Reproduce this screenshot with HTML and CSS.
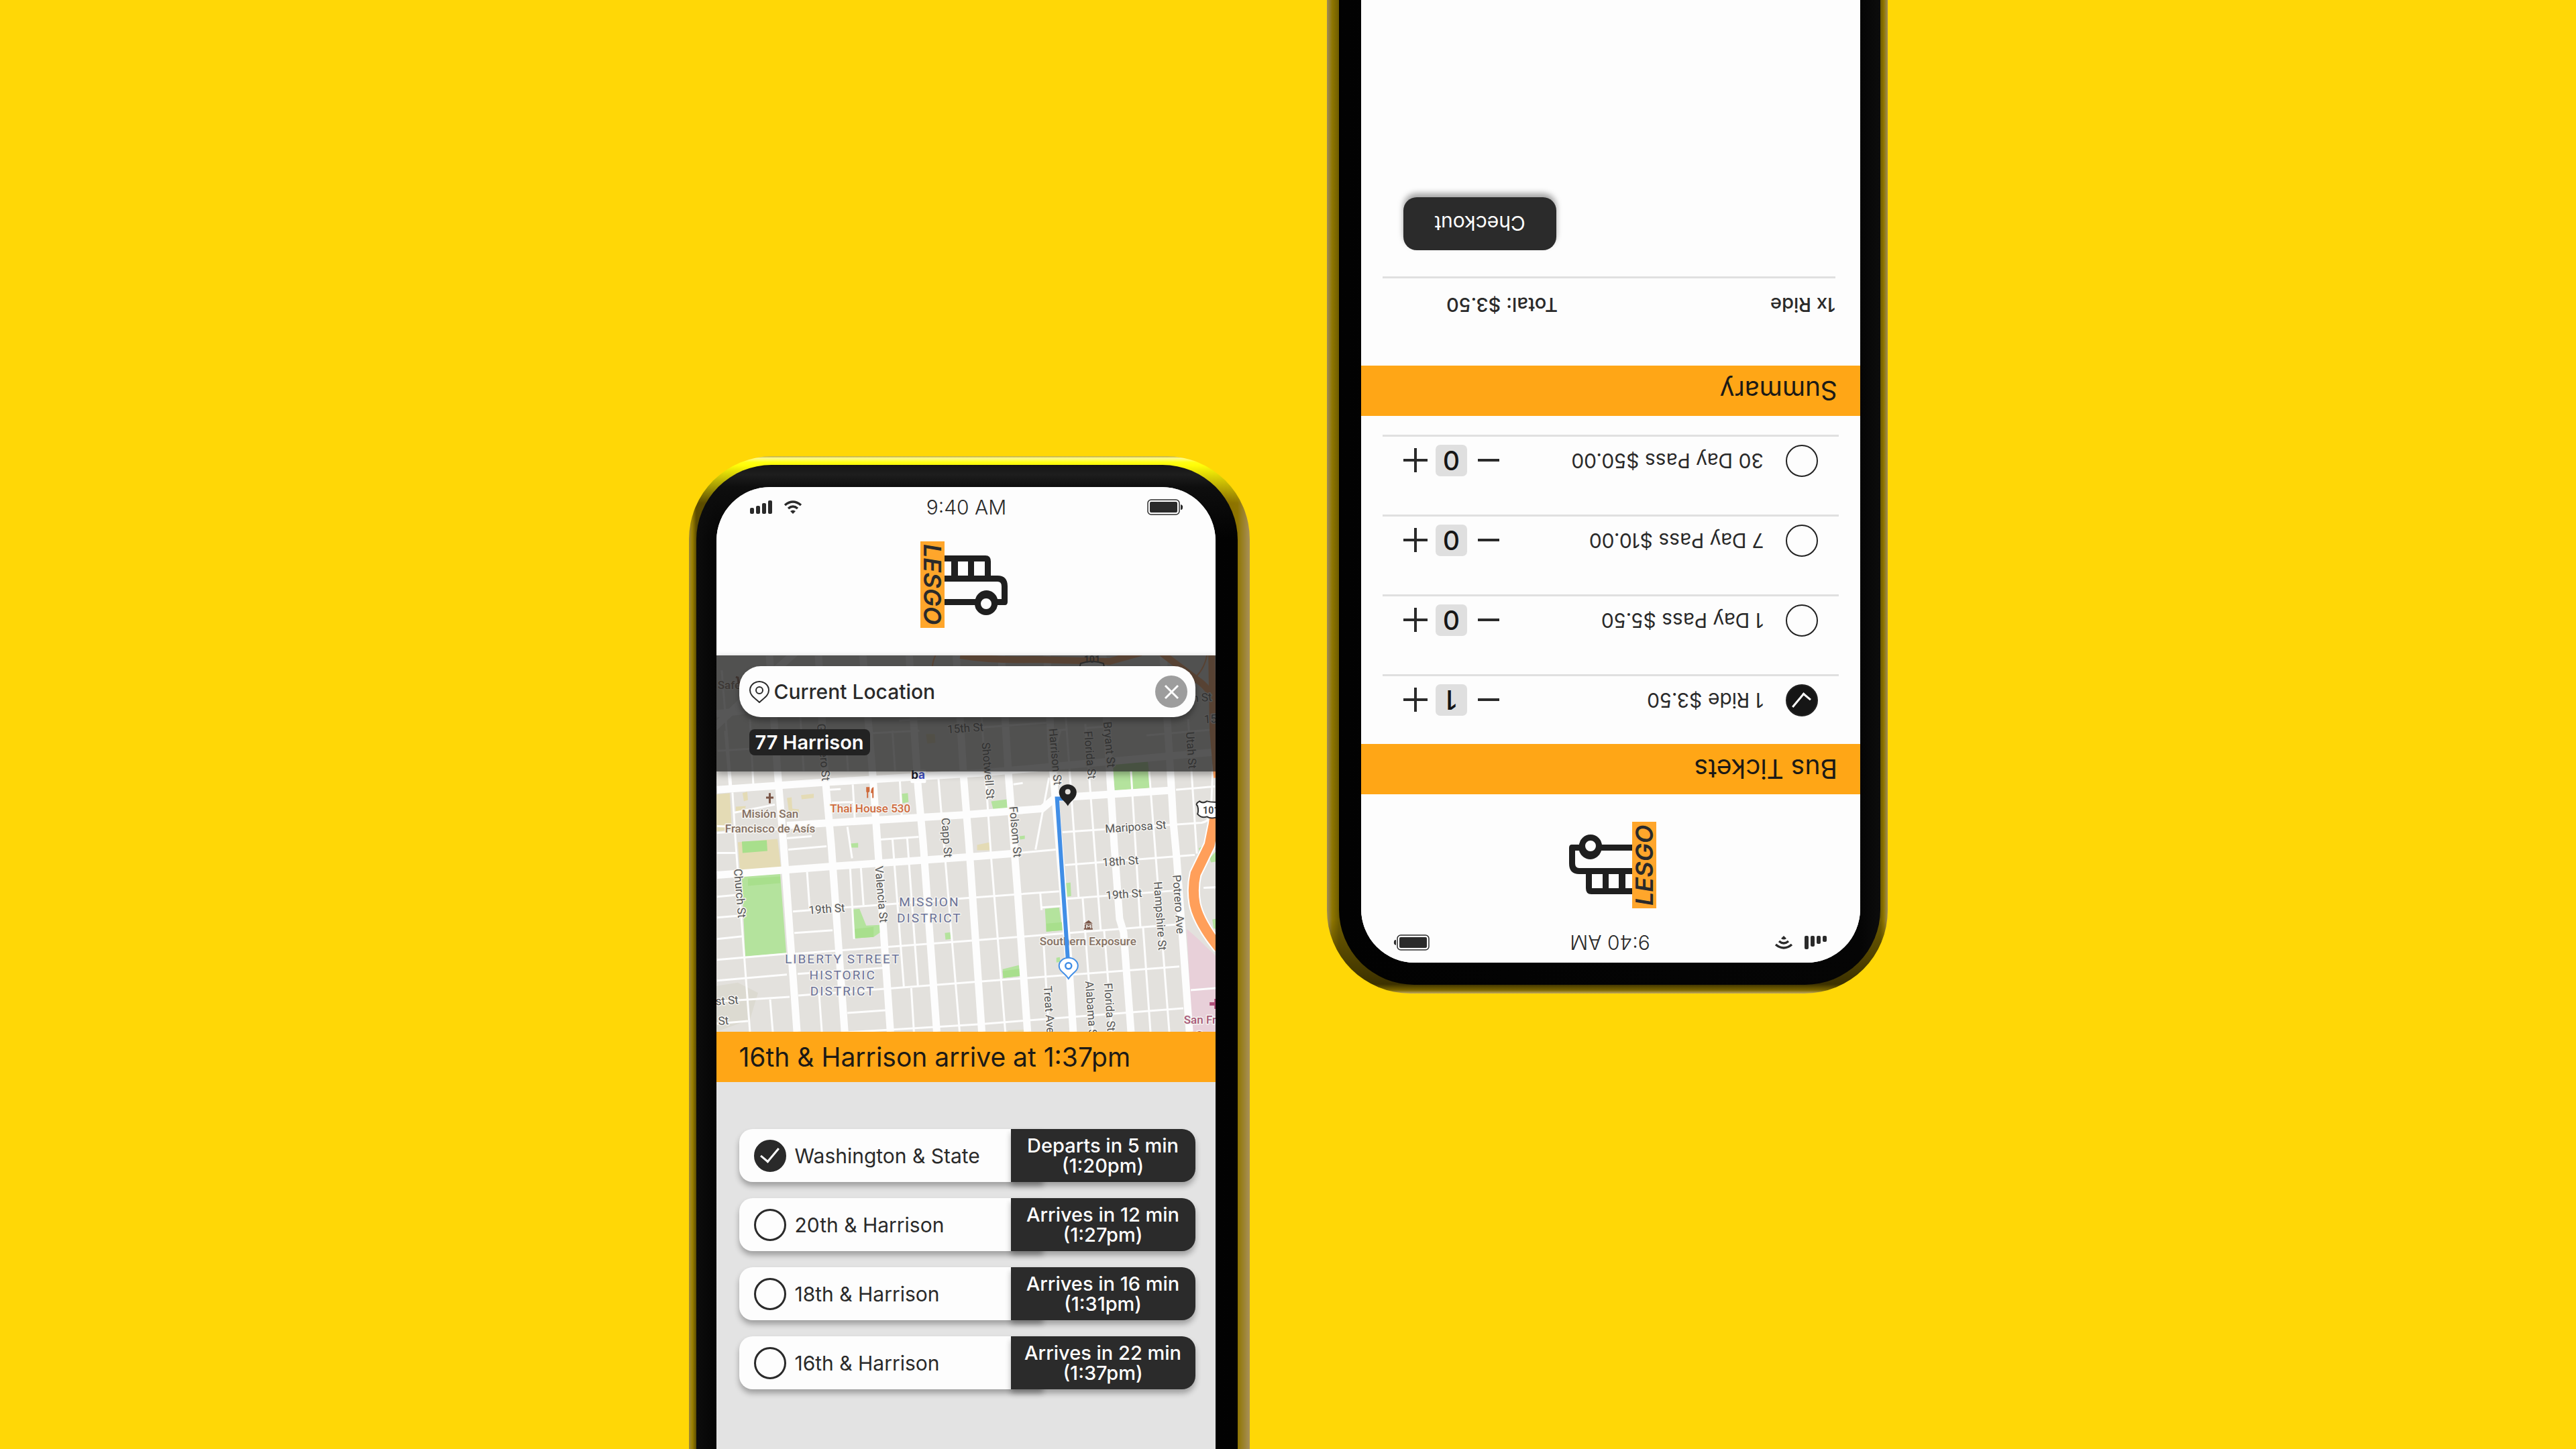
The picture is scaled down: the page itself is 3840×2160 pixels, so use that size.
FILE: index.html
```html
<!DOCTYPE html>
<html lang="en">
<head>
<meta charset="utf-8">
<meta name="viewport" content="width=device-width, initial-scale=1">
<title>LESGO</title>
<link rel="stylesheet" href="styles.css">
</head>
<body>
<svg class="defs" aria-hidden="true">
  <symbol id="bars" viewBox="0 0 34 20">
    <rect x="0" y="11" width="6" height="9" rx="2"/><rect x="9" y="8" width="6" height="12" rx="2"/><rect x="18" y="4" width="6" height="16" rx="2"/><rect x="27" y="0" width="6" height="20" rx="2"/>
  </symbol>
  <symbol id="wifi" viewBox="0 0 28 20">
    <path d="M2 7Q14-3 26 7M7 12Q14 6 21 12" fill="none" stroke="currentColor" stroke-width="3.500"/><path d="M10 16Q14 13 18 16L14 20Z"/>
  </symbol>
  <symbol id="battery" viewBox="0 0 54 24">
    <rect x="1" y="1" width="47" height="22" rx="5" fill="none" stroke="currentColor" stroke-width="1.5"/><rect x="4" y="4" width="41" height="16" rx="2"/><path d="M50 8Q54 9 53 13Q53 16 50 16Z"/>
  </symbol>
  <symbol id="bus" viewBox="0 0 96 90">
    <path fill-rule="evenodd" d="M0 0H61Q69 0 69 9V30H79Q94 30 94 46V69Q94 74 90 74H79A17 17 0 0 1 46 74H0V65H46A17 17 0 0 1 79 65H85V46Q85 39 79 39H0V30H10V9H0ZM20 9V30H35V9ZM44 9V30H60V9Z"/>
    <circle cx="62" cy="72" r="12.5" fill="#fdfdfd" stroke="currentColor" stroke-width="9"/>
  </symbol>
</svg>
<main class="stage">
  <section class="phone phone-lit" aria-label="Route">
    <div class="bezel">
      <div class="screen screen-grey">
        <header class="top">
          <div class="status">
            <span class="signal"><svg class="i-bars"><use href="#bars"/></svg><svg class="i-wifi"><use href="#wifi"/></svg></span>
            <span>9:40 AM</span>
            <svg class="i-battery"><use href="#battery"/></svg>
          </div>
          <div class="logo"><span class="logo-tag">LESGO</span><svg class="logo-bus"><use href="#bus"/></svg></div>
        </header>
        <div class="map-area">
          <svg class="map" viewBox="28 18 743 560" preserveAspectRatio="xMidYMid slice" role="img" aria-label="Map of the Mission District">
            <rect x="28" y="18" width="743" height="560" fill="#e3e1dd"/>
            <path d="M28 510L60 505L90 520L78 560L28 578Z" fill="#dcdad1"/>
            <path fill="#e4dbb5" d="M28 225L48 223L51 277L28 280ZM60 296L119 291L124 333L63 338ZM67 223L74 221L75 233L69 235ZM57 243L72 242L70 249L57 250ZM133 230L140 229L141 246L151 247L151 253L136 251ZM154 226L173 224L173 230L155 232ZM416 300L435 296L435 308L416 308ZM462 576L487 575L487 578L462 578ZM340 135L353 135L354 148L342 149Z"/>
            <path fill="#b4e39d" d="M66 347L123 343L132 461L71 466ZM231 396L241 395L251 420L272 419L272 430L262 437L234 439ZM368 431L376 430L377 440L369 441ZM304 224L313 223L314 236L305 238ZM227 298L239 297L239 304L228 304ZM617 180L670 176L675 215L621 219ZM437 235L461 232L462 245L440 247ZM479 287L487 286L487 291L480 292ZM548 357L555 356L556 376L549 377ZM517 395L538 393L543 427L519 429ZM534 468L539 467L540 474L534 475ZM454 485L478 479L481 495L455 498ZM746 305L755 300L750 320ZM762 320L771 310V325L764 326ZM766 411L771 410V425L768 424Z"/>
            <path fill="#a8df8c" d="M66 295L103 293L104 309L67 312ZM75 350L123 347L123 357L75 361ZM234 425L262 422L262 437L234 439ZM519 417L543 415L543 427L519 429ZM454 488L481 484L481 495L455 498Z"/>
            <path fill="#e8d0d9" d="M728 425L745 440L771 465V578H736Z"/>
            <g class="minor">
              <path d="M29 282L130 276M29 272L57 273M29 440L67 436M29 408L65 405M29 377L62 374M144 431L201 427M223 550L280 546M29 566L75 562M142 399L300 387L400 379L538 369M550 380L710 368M29 471L133 462M145 462L400 443L717 418M29 502L133 493M149 492L277 483M29 533L137 526M150 524L412 504L717 481M220 579L417 567L723 543M467 313L533 307M547 330L740 315M543 281L750 267Q762 265 764 252L767 180M712 218L770 213M734 516L771 513M753 364L771 363"/>
              <path d="M36 40L50 213M41 130L48 213M52 222L57 300L78 578M78 113L83 210M163 340L167 397M227 333L233 440M243 333L247 390M290 290L307 511M312 290L328 510M358 195L390 578M318 513L322 578M181 523L185 578M108 530L112 578M231 210L234 262M301 203L304 257M223 273L230 320M133 290L170 287M135 307L192 302M272 292L329 288M200 237L231 236M54 252L115 240M29 312L57 312M196 218L213 217M290 130L294 190M150 60L158 190M220 130L224 190M300 115L400 108M200 137L330 130"/>
              <path d="M418 40L437 320L458 578M523 200L503 307M548 110L567 378M573 378L588 578M577 120L600 427M605 427L617 578M645 190L659 422M663 423L674 578M672 190L702 578M730 113L743 313M515 447L523 578M510 372L512 397M512 393L540 391M425 125L520 118M532 130L550 128M578 126L605 124M668 137L771 128M470 210L484 208M540 130L533 155M30 160L110 155"/>
            </g>
            <g class="major" id="majors">
              <path d="M107 18L119 190L128 300L148 578M180 18L190 200L199 300L219 578M246 18L261 200L268 300L287 578M315 18L328 213L336 300L356 578M385 18L396 200L404 300L423 578M452 18L463 200L476 367L491 578M520 18L527 167L552 467L559 578M603 18L613 187L620 300L628 410L634 430L645 578M693 18L705 213L708 267L713 320L732 578"/>
              <path d="M29 218L187 207L420 193L600 177L767 162M133 271L400 255L513 246L532 230L702 219M29 345L200 332L417 317L467 313M20 130L110 45L150 10M28 105L70 100"/>
            </g>
            <g fill="none" stroke="#ff9f5a">
              <path stroke="#fff" stroke-width="19" d="M772 240L768 270L762 300L741 343Q736 365 740 388Q746 416 776 453"/>
              <path stroke-width="15" d="M772 240L768 270L762 300L741 343Q736 365 740 388Q746 416 776 453"/>
              <path stroke-width="10" d="M391 18Q440 26 500 24L613 27L660 14M690 14L747 57Q765 70 775 100M765 18L767 130L773 200"/>
              <path stroke-width="2" d="M354 18Q348 30 349 50M700 68Q750 60 758 18"/>
            </g>
            <g class="road">
              <text transform="translate(54 336) rotate(85)">Church St</text>
              <text transform="translate(264 332) rotate(85)">Valencia St</text>
              <text transform="translate(363 260) rotate(86)">Capp St</text>
              <text transform="translate(178 120) rotate(85)">Guerrero St</text>
              <text transform="translate(423 148) rotate(85)">Shotwell St</text>
              <text transform="translate(464 243) rotate(85)">Folsom St</text>
              <text transform="translate(523 127) rotate(85)">Harrison St</text>
              <text transform="translate(575 131) rotate(85)">Florida St</text>
              <text transform="translate(604 117) rotate(85)">Bryant St</text>
              <text transform="translate(727 132) rotate(86)">Utah St</text>
              <text transform="translate(679 355) rotate(86)">Hampshire St</text>
              <text transform="translate(707 345) rotate(86)">Potrero Ave</text>
              <text transform="translate(515 510) rotate(86)">Treat Ave</text>
              <text transform="translate(577 503) rotate(86)">Alabama St</text>
              <text transform="translate(605 506) rotate(86)">Florida St</text>
              <text transform="translate(166 403) rotate(-4)">19th St</text>
              <text transform="translate(603 332) rotate(-4)">18th St</text>
              <text transform="translate(608 381) rotate(-4)">19th St</text>
              <text transform="translate(607 282) rotate(-4)">Mariposa St</text>
              <text transform="translate(372 134) rotate(-4)">15th St</text>
              <text transform="translate(754 119) rotate(-4)">15th St</text>
              <text transform="translate(731 88) rotate(-4)">th St</text>
              <text transform="translate(8 540) rotate(-4)">21st St</text>
              <text transform="translate(-11 571) rotate(-4)">22nd St</text>
            </g>
            <g class="area">
              <text x="345" y="391">MISSION</text>
              <text x="345" y="415">DISTRICT</text>
              <text x="216" y="476">LIBERTY STREET</text>
              <text x="216" y="500">HISTORIC</text>
              <text x="216" y="524">DISTRICT</text>
            </g>
            <g class="place">
              <text x="108" y="260">Misión San</text>
              <text x="108" y="282">Francisco de Asís</text>
              <text x="581" y="449">Southern Exposure</text>
              <text x="62" y="68">Safeway</text>
            </g>
            <text class="place food" x="257" y="252">Thai House 530</text>
            <text class="place hospital" x="757" y="566" text-anchor="start">San Fran</text>
            <text class="place hospital" x="770" y="589">General</text>
            <path d="M106 223H109V228H113V231H109V238H106V231H102V228H106Z" fill="#7a5546"/>
            <path d="M251 214V220Q251 222 252 222V230H254V222Q256 222 256 220V214M260 215Q258 217 258 223H260V230H262V214Z" fill="#cf6a3c"/>
            <path d="M57 50L60 51L61 58H67L69 51M61 61H67" fill="none" stroke="#8a5e4c" stroke-width="3"/>
            <path d="M575 417L582 412L588 417ZM576 418H587V424H588V426H575V424H576ZM578 419V424H580V421L582 423L584 421V424H586V419H584L582 421L580 419Z" fill="#7a5546" fill-rule="evenodd"/>
            <path d="M769 529H774V534H778V539H774V544H769V539H762V534H769Z" fill="#b0507a"/>
            <rect x="317" y="188" width="23" height="20" rx="2" fill="#fff"/>
            <text class="bart" x="318" y="202">b<tspan fill="#3f4fc4">a</tspan></text>
            <g class="shield">
              <path d="M570 30Q566 44 570 52H602Q608 44 604 30Q587 24 570 30Z" fill="#fff" stroke="#333" stroke-width="2"/><text x="575" y="29">101</text>
              <path d="M744 242Q740 239 747 235Q752 239 758 235Q765 237 776 236V258Q764 262 758 258Q750 261 744 254Q746 249 744 242Z" fill="#fff" stroke="#333" stroke-width="2"/><text x="752" y="254">101</text>
            </g>
            <path d="M551 231H535L551 470" fill="none" stroke="#418ee6" stroke-width="6"/>
            <path d="M552 499C546 490 538 488 538 480A14 12 0 0 1 566 480C566 488 558 490 552 499Z" fill="#fff" stroke="#418ee6" stroke-width="2"/>
            <circle cx="552" cy="480" r="4.500" fill="#fff" stroke="#418ee6" stroke-width="2.500"/>
            <path d="M551 242C546 234 538 231 538 222A13 12 0 0 1 564 222C564 231 556 234 551 242Z" fill="#222"/><circle cx="551" cy="221" r="4" fill="#e3e1dd"/>
          </svg>
          <form class="finder">
            <label class="search">
              <svg class="i-pin" viewBox="0 0 30 33"><path d="M15 32C9 26 1 22 1 14A14 13 0 0 1 29 14C29 22 21 26 15 32Z"/><circle cx="15" cy="14" r="5"/></svg>
              <input type="text" value="Current Location" aria-label="Location">
              <button type="button" class="clear" aria-label="Clear"><svg viewBox="0 0 48 48"><path d="M15 15L34 34M34 15L15 34"/></svg></button>
            </label>
            <button type="button" class="chip">77 Harrison</button>
          </form>
        </div>
        <h1 class="bar">16th &amp; Harrison arrive at 1:37pm</h1>
        <div class="stops">
          <div class="stop"><label class="stop-name"><input class="tick" type="radio" name="stop" checked>Washington &amp; State</label><span class="eta">Departs in 5 min<br>(1:20pm)</span></div>
          <div class="stop"><label class="stop-name"><input class="tick" type="radio" name="stop">20th &amp; Harrison</label><span class="eta">Arrives in 12 min<br>(1:27pm)</span></div>
          <div class="stop"><label class="stop-name"><input class="tick" type="radio" name="stop">18th &amp; Harrison</label><span class="eta">Arrives in 16 min<br>(1:31pm)</span></div>
          <div class="stop"><label class="stop-name"><input class="tick" type="radio" name="stop">16th &amp; Harrison</label><span class="eta">Arrives in 22 min<br>(1:37pm)</span></div>
        </div>
      </div>
    </div>
  </section>

  <section class="phone phone-turned" aria-label="Tickets">
    <div class="bezel">
      <div class="screen">
        <header class="top">
          <div class="status">
            <span class="signal"><svg class="i-bars"><use href="#bars"/></svg><svg class="i-wifi"><use href="#wifi"/></svg></span>
            <span>9:40 AM</span>
            <svg class="i-battery"><use href="#battery"/></svg>
          </div>
          <div class="logo"><span class="logo-tag">LESGO</span><svg class="logo-bus"><use href="#bus"/></svg></div>
        </header>
        <h2 class="bar">Bus Tickets</h2>
        <div class="tickets">
          <div class="ticket"><label><input class="tick thin" type="radio" name="ticket" checked>1 Ride $3.50</label><span class="qty"><button type="button" aria-label="Fewer"><svg viewBox="0 0 36 36"><path d="M0 18H32"/></svg></button><output>1</output><button type="button" aria-label="More"><svg viewBox="0 0 36 36"><path d="M0 18H36M18 0V36"/></svg></button></span></div>
          <div class="ticket"><label><input class="tick thin" type="radio" name="ticket">1 Day Pass $5.50</label><span class="qty"><button type="button" aria-label="Fewer"><svg viewBox="0 0 36 36"><path d="M0 18H32"/></svg></button><output>0</output><button type="button" aria-label="More"><svg viewBox="0 0 36 36"><path d="M0 18H36M18 0V36"/></svg></button></span></div>
          <div class="ticket"><label><input class="tick thin" type="radio" name="ticket">7 Day Pass $10.00</label><span class="qty"><button type="button" aria-label="Fewer"><svg viewBox="0 0 36 36"><path d="M0 18H32"/></svg></button><output>0</output><button type="button" aria-label="More"><svg viewBox="0 0 36 36"><path d="M0 18H36M18 0V36"/></svg></button></span></div>
          <div class="ticket"><label><input class="tick thin" type="radio" name="ticket">30 Day Pass $50.00</label><span class="qty"><button type="button" aria-label="Fewer"><svg viewBox="0 0 36 36"><path d="M0 18H32"/></svg></button><output>0</output><button type="button" aria-label="More"><svg viewBox="0 0 36 36"><path d="M0 18H36M18 0V36"/></svg></button></span></div>
        </div>
        <h2 class="bar">Summary</h2>
        <div class="summary">
          <p class="total"><span>1x Ride</span><span>Total: $3.50</span></p>
          <button type="button" class="checkout">Checkout</button>
        </div>
      </div>
    </div>
  </section>
</main>
</body>
</html>
```
FILE: styles.css
```css
* { box-sizing: border-box; }
body { margin: 0; background: #ffd706; color: #2a2a2a; font-family: Inter, "Liberation Sans", sans-serif; font-size: 30px; line-height: 30px; }
button, input { font: inherit; color: inherit; border: 0; padding: 0; margin: 0; background: none; }
h1, h2, p { margin: 0; font-weight: 400; }
svg { display: block; fill: currentColor; }
.defs { position: absolute; width: 0; height: 0; }

.stage { display: flex; justify-content: center; gap: 115px; height: 100vh; overflow: hidden; }
.phone { flex: 0 1 836px; min-height: 1700px; display: flex; flex-direction: column; padding: 13px 18px 13px 11px; border-radius: 124px; }
.phone-lit { margin-top: 680px; align-self: flex-start;
  background: linear-gradient(#b9a53c 0, #fffb90 3px, #ffff14 9px, #fffc08 14px, #ffe60600 70px), linear-gradient(90deg, #a08a3a 0, #9a8000 5px, #5c4c00 11px, #8a7000 800px, #8f7500 818px, #a8905a 100%); }
.phone-turned { margin-bottom: 679px; align-self: flex-end; transform: rotate(180deg);
  background: linear-gradient(#c0a860 0, #7c6600 5px, #3c3100 14px, #3c310000 110px), linear-gradient(90deg, #a08c5a 0, #8e7600 6px, #6e5c00 11px, #6e5c00 818px, #8e7600 828px, #a08c5a 100%); }
.bezel { flex: 1; display: flex; flex-direction: column; padding: 33px 33px 33px 30px; border-radius: 112px; background: linear-gradient(90deg, #0c0c0c, #050505 30px, #020202); }
.phone-lit .bezel { background: linear-gradient(#141414 0, #1e1e1e 14px, #0e0e0e 33px, #0e0e0e00 110px), linear-gradient(90deg, #0c0c0c, #050505 30px, #020202); }
.screen { flex: 1; border-radius: 80px; overflow: hidden; background: #fdfdfd; }
.screen-grey { background: #e3e3e3; }

.top { height: 251px; background: #fdfdfd; }
.status { display: grid; grid-template-columns: 1fr auto 1fr; align-items: center; padding: 8px 48px 0 50px; height: 52px; line-height: 40px; font-weight: 300; }
.signal { display: flex; gap: 16px; }
.i-bars { width: 34px; height: 20px; }
.i-wifi { width: 28px; height: 20px; }
.i-battery { width: 54px; height: 24px; justify-self: end; }
.logo { display: flex; justify-content: center; padding: 29px 4px 0 0; }
.logo-tag { writing-mode: vertical-rl; width: 36px; height: 129px; line-height: 36px; text-align: center; background: #ffa62b; font-style: italic; font-weight: 600; font-size: 36px; }
.logo-bus { width: 96px; height: 90px; margin-top: 21px; color: #1f1f1f; }

.map-area { display: grid; }
.map-area > * { grid-area: 1 / 1; }
.map { width: 100%; height: 561px; font-family: Roboto, sans-serif; font-size: 17px; }
.minor { fill: none; stroke: #fdfdfd; stroke-width: 3; }
.major { fill: none; stroke: #fdfdfd; stroke-width: 11; }
.road text, .area text, .place, .place text { paint-order: stroke; stroke: #f4f3f0; stroke-width: 3px; stroke-linejoin: round; }
.road { fill: #555; }
.area { fill: #6b7298; font-size: 19px; letter-spacing: 2px; text-anchor: middle; }
.place { fill: #857062; font-weight: 500; text-anchor: middle; }
.food { fill: #cf6a3c; }
.hospital { fill: #a85a78; }
.bart { font: 700 17px Inter, sans-serif; fill: #1c1c2c; }
.shield { font-size: 14px; font-weight: 700; fill: #444; }

.finder { align-self: start; height: 173px; padding: 16px 30px 0 34px; background: rgba(40, 40, 40, .78); box-shadow: 0 4px 10px rgba(0, 0, 0, .35); }
.search { display: flex; align-items: center; gap: 7px; height: 76px; padding: 0 12px 0 15px; border-radius: 32px; background: #fdfdfd; box-shadow: 0 6px 8px rgba(0, 0, 0, .3); }
.search input { flex: 1; min-width: 0; font-weight: 500; line-height: 40px; }
.i-pin { width: 30px; height: 33px; fill: none; stroke: #2a2a2a; stroke-width: 2; }
.clear { width: 48px; height: 48px; border-radius: 50%; background: #9d9d9d; }
.clear svg { fill: none; stroke: #fff; stroke-width: 3; }
.chip { display: block; margin: 18px 0 0 15px; height: 39px; padding: 0 9px; border-radius: 8px; background: #222; color: #fff; font-size: 29px; font-weight: 600; }

.bar { height: 75px; padding: 0 34px; background: #ffa616; color: #1c1a16; font-size: 39px; line-height: 75px; white-space: nowrap; }

.stops { display: grid; gap: 24px; padding: 70px 30px 0 34px; }
.stop { display: flex; height: 79px; white-space: nowrap; }
.stop-name { flex: 1; display: flex; align-items: center; gap: 13px; margin-right: -48px; padding-left: 22px; border-radius: 20px 0 0 20px; background: #fdfdfd; box-shadow: 0 6px 8px rgba(0, 0, 0, .3); }
.eta { position: relative; flex: 0 0 275px; display: grid; place-content: center; text-align: center; border-radius: 0 20px 20px 0; background: #2b2b2b; color: #fff; font-size: 29px; font-weight: 500; box-shadow: 0 6px 8px rgba(0, 0, 0, .3); }
.tick { appearance: none; display: grid; place-content: center; width: 48px; height: 48px; border: 3px solid #2a2a2a; border-radius: 50%; }
.tick.thin { border: 2px solid #222; }
.tick:checked { background: #2a2a2a; }
.thin:checked { background: #161616; }
.tick:checked::after { content: ""; width: 24px; height: 12px; margin-top: -8px; border: solid #fff; border-width: 0 0 3px 3px; transform: rotate(-50deg); }

.tickets { padding: 0 32px 28px; }
.ticket { display: flex; justify-content: space-between; align-items: end; height: 119px; padding: 0 31px 12px; border-bottom: 3px solid #e0e0e0; }
.ticket:first-child { height: 104px; }
.ticket label { display: flex; align-items: center; gap: 33px; }
.qty { display: flex; align-items: center; gap: 12px; }
.qty button { width: 36px; height: 36px; }
.qty svg { width: 36px; height: 36px; fill: none; stroke: #2a2a2a; stroke-width: 4; }
.qty output { width: 47px; height: 47px; border-radius: 7px; background: #dfdfdf; text-align: center; font-size: 39px; line-height: 47px; font-weight: 500; color: #161616; }

.summary { padding: 0 32px 0 37px; }
.total { display: grid; grid-template-columns: 414px 1fr; align-items: end; height: 133px; padding-bottom: 24px; border-bottom: 3px solid #e0e0e0; font-size: 29px; font-weight: 500; }
.checkout { display: block; width: 228px; height: 79px; margin: 39px 31px 0 auto; border-radius: 20px; background: #2b2b2b; color: #fff; box-shadow: 0 6px 8px rgba(0, 0, 0, .35); }
```
